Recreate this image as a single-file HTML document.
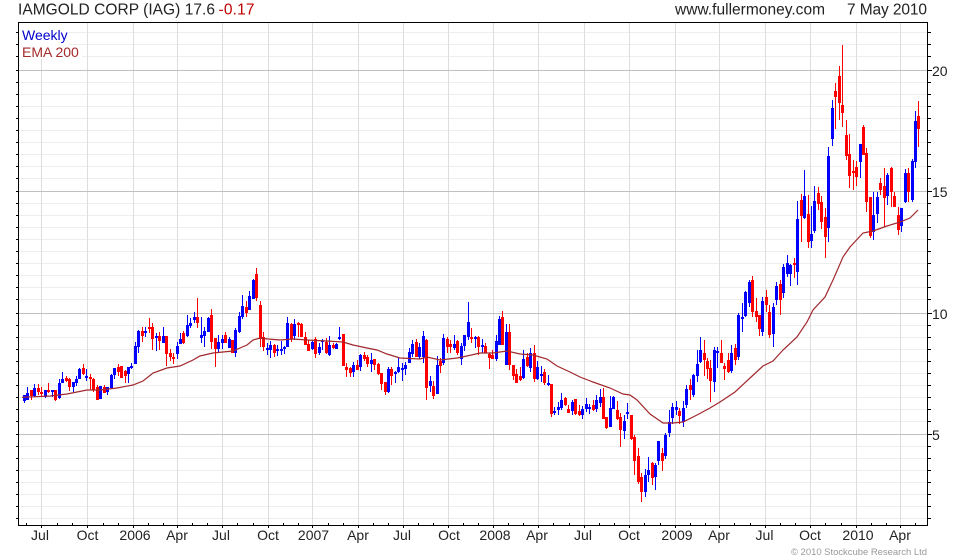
<!DOCTYPE html>
<html><head><meta charset="utf-8"><title>IAMGOLD CORP</title>
<style>html,body{margin:0;padding:0;background:#fff}svg{display:block}text{font-family:"Liberation Sans",Arial,sans-serif;font-size:14px;fill:#222}</style></head>
<body>
<svg width="980" height="560" viewBox="0 0 980 560" xmlns="http://www.w3.org/2000/svg">
<rect width="980" height="560" fill="#fff"/>
<g shape-rendering="crispEdges">
<path fill="none" stroke="#eeeeee" d="M19 32.5H927M19 44.5H927M19 56.5H927M19 82.5H927M19 94.5H927M19 106.5H927M19 118.5H927M19 130.5H927M19 142.5H927M19 154.5H927M19 166.5H927M19 178.5H927M19 203.5H927M19 215.5H927M19 227.5H927M19 239.5H927M19 251.5H927M19 263.5H927M19 275.5H927M19 287.5H927M19 299.5H927M19 325.5H927M19 337.5H927M19 349.5H927M19 361.5H927M19 373.5H927M19 385.5H927M19 397.5H927M19 409.5H927M19 421.5H927M19 446.5H927M19 458.5H927M19 470.5H927M19 482.5H927M19 494.5H927M19 506.5H927M19 518.5H927"/>
<path fill="none" stroke="#dddddd" d="M41.5 23V525M87.5 23V525M133.5 23V525M177.5 23V525M222.5 23V525M268.5 23V525M312.5 23V525M358.5 23V525M403.5 23V525M448.5 23V525M493.5 23V525M538.5 23V525M584.5 23V525M629.5 23V525M675.5 23V525M719.5 23V525M765.5 23V525M810.5 23V525M856.5 23V525M900.5 23V525"/>
<path fill="none" stroke="#c0c0c0" d="M19 70.5H927M19 191.5H927M19 313.5H927M19 434.5H927"/>
<rect x="19" y="23" width="50" height="22" fill="#fff"/>
<rect x="19" y="45" width="63" height="14" fill="#fff"/>
<!-- blue wicks -->
<path fill="none" stroke="#0000ff" stroke-width="1" d="M24.5 395V403M27.5 387V400M34.5 384V397M45.5 390V398M52.5 390V397M59.5 379V399M62.5 372V383M73.5 382V392M76.5 376V386M79.5 368V379M86.5 369V381M100.5 386V399M107.5 387V395M111.5 374V389M114.5 368V379M128.5 367V383M131.5 363V369M135.5 342V364M138.5 330V353M145.5 327V337M156.5 333V351M163.5 327V343M177.5 342V359M180.5 333V344M187.5 315V337M190.5 318V328M194.5 312V323M201.5 317V343M204.5 327V347M208.5 317V332M218.5 335V352M222.5 335V349M229.5 337V348M235.5 328V357M239.5 312V333M242.5 295V319M249.5 291V310M253.5 279V299M267.5 343V355M270.5 341V358M277.5 345V356M281.5 341V355M284.5 346V354M287.5 317V347M294.5 319V340M312.5 340V350M319.5 343V355M322.5 339V350M329.5 336V356M336.5 343V349M339.5 327V340M353.5 362V377M360.5 354V371M371.5 353V372M388.5 367V393M395.5 371V383M398.5 357V373M402.5 363V381M405.5 362V375M409.5 348V363M412.5 340V357M419.5 343V359M423.5 331V363M430.5 376V392M437.5 356V394M443.5 334V365M454.5 335V350M461.5 343V365M464.5 335V351M468.5 302V340M475.5 336V348M482.5 339V353M496.5 335V361M499.5 316V345M506.5 324V365M523.5 350V379M530.5 348V372M537.5 361V380M541.5 366V382M548.5 375V386M554.5 407V415M558.5 402V415M561.5 393V410M572.5 400V415M582.5 406V419M586.5 398V412M589.5 404V414M596.5 395V412M600.5 389V407M610.5 396V427M613.5 396V409M624.5 415V439M627.5 403V419M645.5 469V497M648.5 457V482M655.5 463V490M658.5 441V465M665.5 433V459M669.5 410V437M672.5 403V424M676.5 401V415M683.5 401V427M686.5 385V408M693.5 374V397M697.5 350V382M700.5 337V363M714.5 347V392M717.5 347V368M731.5 345V373M738.5 313V360M742.5 303V332M745.5 291V317M749.5 280V307M762.5 297V336M773.5 303V347M776.5 282V305M783.5 264V298M787.5 255V277M790.5 264V286M797.5 201V285M804.5 170V219M811.5 206V248M814.5 186V233M828.5 147V242M832.5 100V146M860.5 144V178M873.5 192V240M877.5 192V223M887.5 173V205M901.5 208V232M905.5 169V203M912.5 159V202M915.5 111V168"/>
<!-- blue bodies -->
<path fill="none" stroke="#0000ff" stroke-width="3" d="M24.5 395V401M27.5 393V400M34.5 388V396M45.5 390V397M52.5 390V392M59.5 383V398M62.5 379V383M73.5 382V387M76.5 379V383M79.5 369V379M86.5 376V378M100.5 386V399M107.5 387V392M111.5 375V388M114.5 368V375M128.5 367V374M131.5 366V368M135.5 346V364M138.5 331V347M145.5 331V333M156.5 336V338M163.5 336V343M177.5 346V354M180.5 339V344M187.5 325V336M190.5 323V326M194.5 317V320M201.5 335V338M204.5 331V336M208.5 318V332M218.5 342V349M222.5 339V343M229.5 339V348M235.5 330V353M239.5 316V332M242.5 306V317M249.5 296V310M253.5 280V299M267.5 348V350M270.5 345V350M277.5 349V351M281.5 349V351M284.5 347V349M287.5 323V347M294.5 324V336M312.5 342V349M319.5 347V353M322.5 341V342M329.5 345V355M336.5 344V349M339.5 337V339M353.5 365V372M360.5 355V367M371.5 360V364M388.5 369V392M395.5 372V374M398.5 367V372M402.5 368V370M405.5 365V369M409.5 352V363M412.5 344V354M419.5 347V357M423.5 336V357M430.5 381V386M437.5 365V394M443.5 338V363M454.5 344V348M461.5 346V359M464.5 335V346M468.5 322V337M475.5 337V339M482.5 345V347M496.5 341V359M499.5 319V345M506.5 332V365M523.5 359V378M530.5 353V368M537.5 367V379M541.5 374V376M548.5 383V385M554.5 411V413M558.5 407V410M561.5 400V408M572.5 402V411M582.5 409V415M586.5 404V409M589.5 407V409M596.5 400V409M600.5 397V403M610.5 408V427M613.5 397V409M624.5 421V431M627.5 412V414M645.5 475V492M648.5 470V475M655.5 465V477M658.5 441V461M665.5 435V456M669.5 422V433M672.5 407V418M676.5 407V410M683.5 408V422M686.5 389V405M693.5 375V395M697.5 364V376M700.5 350V362M714.5 350V382M717.5 351V353M731.5 353V371M738.5 315V357M742.5 317V319M745.5 292V316M749.5 282V303M762.5 301V332M773.5 307V334M776.5 286V300M783.5 267V293M787.5 263V274M790.5 265V274M797.5 219V272M804.5 196V218M811.5 234V241M814.5 201V231M828.5 156V228M832.5 108V139M860.5 144V162M873.5 215V232M877.5 197V214M887.5 175V196M901.5 208V226M905.5 173V202M912.5 161V200M915.5 121V162"/>
<!-- red wicks -->
<path fill="none" stroke="#ff0000" stroke-width="1" d="M31.5 390V400M38.5 384V395M41.5 387V397M48.5 383V393M55.5 390V401M66.5 376V382M69.5 378V391M83.5 364V375M90.5 374V390M93.5 378V392M97.5 385V400M104.5 385V393M118.5 364V376M121.5 366V378M125.5 370V383M142.5 327V342M149.5 318V333M152.5 323V350M159.5 332V350M166.5 336V366M170.5 349V361M173.5 353V364M183.5 331V344M197.5 298V328M211.5 309V349M215.5 338V367M225.5 332V343M232.5 340V353M246.5 301V317M256.5 268V301M260.5 301V347M263.5 332V351M274.5 344V357M291.5 323V342M298.5 322V337M301.5 323V337M305.5 332V345M308.5 340V351M315.5 337V358M326.5 338V354M333.5 343V349M343.5 334V366M346.5 363V377M350.5 367V377M357.5 360V370M364.5 352V361M367.5 355V367M374.5 359V370M378.5 363V375M381.5 373V390M385.5 382V395M391.5 367V385M416.5 339V357M426.5 339V400M433.5 381V399M440.5 358V373M447.5 337V353M450.5 340V353M457.5 340V355M471.5 328V343M478.5 336V355M485.5 343V353M489.5 353V369M492.5 350V359M502.5 311V345M509.5 324V370M513.5 365V380M516.5 369V383M520.5 367V381M527.5 353V367M534.5 345V382M544.5 369V385M551.5 384V417M565.5 397V406M568.5 405V413M575.5 399V415M579.5 405V416M593.5 400V411M603.5 388V419M606.5 417V429M617.5 401V420M620.5 413V447M631.5 415V440M634.5 435V475M638.5 448V484M641.5 473V502M652.5 462V485M662.5 448V471M679.5 408V424M690.5 379V400M704.5 340V376M707.5 358V379M710.5 360V402M721.5 340V363M724.5 363V380M728.5 353V373M735.5 344V365M752.5 276V317M756.5 298V322M759.5 315V336M766.5 290V312M769.5 305V338M780.5 280V315M794.5 258V278M801.5 194V242M808.5 195V248M818.5 187V210M821.5 196V229M825.5 208V258M835.5 83V129M839.5 66V120M842.5 45V127M846.5 120V160M849.5 134V188M853.5 160V190M856.5 161V186M863.5 125V155M866.5 148V212M870.5 197V238M880.5 178V195M884.5 168V227M891.5 167V207M894.5 192V207M898.5 207V235M908.5 168V202M918.5 101V147"/>
<!-- red bodies -->
<path fill="none" stroke="#ff0000" stroke-width="3" d="M31.5 390V396M38.5 388V392M41.5 392V394M48.5 390V392M55.5 390V400M66.5 378V381M69.5 379V387M83.5 368V374M90.5 377V379M93.5 379V390M97.5 387V400M104.5 387V393M118.5 367V372M121.5 366V378M125.5 371V376M142.5 331V336M149.5 327V329M152.5 327V339M159.5 336V341M166.5 336V354M170.5 353V357M173.5 357V359M183.5 333V343M197.5 317V323M211.5 315V342M215.5 338V349M225.5 335V343M232.5 340V353M246.5 307V313M256.5 274V298M260.5 305V339M263.5 337V347M274.5 345V353M291.5 324V339M298.5 323V325M301.5 324V337M305.5 337V345M308.5 344V351M315.5 339V354M326.5 342V353M333.5 345V348M343.5 334V366M346.5 367V370M350.5 368V373M357.5 365V370M364.5 355V359M367.5 357V364M374.5 359V365M378.5 364V374M381.5 373V384M385.5 382V392M391.5 369V376M416.5 342V357M426.5 340V388M433.5 386V396M440.5 361V366M447.5 339V347M450.5 344V347M457.5 341V353M471.5 337V339M478.5 337V347M485.5 346V353M489.5 354V358M492.5 355V359M502.5 317V345M509.5 332V365M513.5 365V376M516.5 374V383M520.5 376V380M527.5 357V366M534.5 353V379M544.5 372V383M551.5 384V414M565.5 398V405M568.5 409V413M575.5 399V414M579.5 411V415M593.5 405V410M603.5 397V419M606.5 417V428M617.5 410V419M620.5 417V430M631.5 415V439M634.5 437V461M638.5 456V482M641.5 477V492M652.5 463V478M662.5 453V461M679.5 411V416M690.5 385V390M704.5 353V360M707.5 361V369M710.5 368V381M721.5 353V363M724.5 366V369M728.5 360V372M735.5 348V360M752.5 280V312M756.5 311V317M759.5 315V329M766.5 297V305M769.5 312V335M780.5 284V300M794.5 263V265M801.5 200V216M808.5 214V242M818.5 193V204M821.5 202V222M825.5 217V237M835.5 91V97M839.5 76V103M842.5 105V113M846.5 135V156M849.5 154V176M853.5 171V173M856.5 167V177M863.5 127V155M866.5 153V202M870.5 197V236M880.5 183V190M884.5 186V198M891.5 168V192M894.5 196V207M898.5 215V230M908.5 173V192M918.5 116V129"/>
</g>
<!-- EMA -->
<polyline fill="none" stroke="#a0282c" stroke-width="1.2" points="22,397.3 50,396 67,394 87,390 100,390 117,388 133,385 143,381 153,373 167,368 180,366 193,360 200,356 213,353 233,351 240,348 247,345 253,340 260,338 268,339 280,340 293,339 307,340 327,341 343,342 353,345 367,348 377,350 387,354 400,358 420,359 427,357 440,360 457,358 467,356 480,353 493,353 507,351 520,354 533,355 547,359 557,366 570,372 580,377 593,382 610,388 623,394 630,395 637,400 650,414 663,423 673,423 683,422 697,415 710,408 720,402 735,392 750,378 763,366 773,361 783,350 797,337 807,322 813,310 825,297 833,280 843,257 850,247 863,233 873,231 887,226 900,222 910,218 918,210"/>
<!-- frame and ticks -->
<g shape-rendering="crispEdges" fill="none" stroke="#000">
<path d="M18.5 22.5H927.5V525.5H18.5Z"/>
<path d="M16 32.5h2M16 44.5h2M16 56.5h2M16 70.5h2M16 82.5h2M16 94.5h2M16 106.5h2M16 118.5h2M16 130.5h2M16 142.5h2M16 154.5h2M16 166.5h2M16 178.5h2M16 191.5h2M16 203.5h2M16 215.5h2M16 227.5h2M16 239.5h2M16 251.5h2M16 263.5h2M16 275.5h2M16 287.5h2M16 299.5h2M16 313.5h2M16 325.5h2M16 337.5h2M16 349.5h2M16 361.5h2M16 373.5h2M16 385.5h2M16 397.5h2M16 409.5h2M16 421.5h2M16 434.5h2M16 446.5h2M16 458.5h2M16 470.5h2M16 482.5h2M16 494.5h2M16 506.5h2M16 518.5h2"/>
<path d="M928 32.5h3M928 44.5h3M928 56.5h3M928 70.5h4M928 82.5h3M928 94.5h3M928 106.5h3M928 118.5h3M928 130.5h3M928 142.5h3M928 154.5h3M928 166.5h3M928 178.5h3M928 191.5h4M928 203.5h3M928 215.5h3M928 227.5h3M928 239.5h3M928 251.5h3M928 263.5h3M928 275.5h3M928 287.5h3M928 299.5h3M928 313.5h4M928 325.5h3M928 337.5h3M928 349.5h3M928 361.5h3M928 373.5h3M928 385.5h3M928 397.5h3M928 409.5h3M928 421.5h3M928 434.5h4M928 446.5h3M928 458.5h3M928 470.5h3M928 482.5h3M928 494.5h3M928 506.5h3M928 518.5h3"/>
<path d="M26.5 523v2M57.5 523v2M72.5 523v2M103.5 523v2M118.5 523v2M148.5 523v2M163.5 523v2M192.5 523v2M207.5 523v2M237.5 523v2M253.5 523v2M283.5 523v2M298.5 523v2M328.5 523v2M343.5 523v2M373.5 523v2M388.5 523v2M418.5 523v2M433.5 523v2M463.5 523v2M478.5 523v2M508.5 523v2M523.5 523v2M553.5 523v2M569.5 523v2M599.5 523v2M614.5 523v2M644.5 523v2M660.5 523v2M690.5 523v2M705.5 523v2M734.5 523v2M750.5 523v2M780.5 523v2M795.5 523v2M825.5 523v2M841.5 523v2M871.5 523v2M886.5 523v2M915.5 523v2"/>
<path d="M41.5 526v2M87.5 526v2M133.5 526v2M177.5 526v2M222.5 526v2M268.5 526v2M312.5 526v2M358.5 526v2M403.5 526v2M448.5 526v2M493.5 526v2M538.5 526v2M584.5 526v2M629.5 526v2M675.5 526v2M719.5 526v2M765.5 526v2M810.5 526v2M856.5 526v2M900.5 526v2"/>
</g>
<!-- text -->
<text x="18" y="14.5" style="font-size:15.5px" textLength="197" lengthAdjust="spacing">IAMGOLD CORP (IAG) 17.6</text>
<text x="218.5" y="14.5" style="font-size:15.5px;fill:#c00000" textLength="36" lengthAdjust="spacing">-0.17</text>
<text x="675" y="14.5" style="font-size:15.5px" textLength="150" lengthAdjust="spacing">www.fullermoney.com</text>
<text x="847" y="14.5" style="font-size:15.5px" textLength="80" lengthAdjust="spacing">7 May 2010</text>
<text x="22" y="40" style="fill:#0000cc">Weekly</text>
<text x="22" y="57" style="fill:#a52a2a">EMA 200</text>
<text x="932" y="76">20</text>
<text x="932" y="197">15</text>
<text x="932" y="319">10</text>
<text x="932" y="440">5</text>
<g text-anchor="middle">
<text x="40" y="540">Jul</text><text x="87.5" y="540">Oct</text><text x="135" y="540">2006</text><text x="177" y="540">Apr</text><text x="221" y="540">Jul</text><text x="268" y="540">Oct</text><text x="313.5" y="540">2007</text><text x="358" y="540">Apr</text><text x="402" y="540">Jul</text><text x="449" y="540">Oct</text><text x="495" y="540">2008</text><text x="537" y="540">Apr</text><text x="583" y="540">Jul</text><text x="629" y="540">Oct</text><text x="677" y="540">2009</text><text x="719" y="540">Apr</text><text x="764.5" y="540">Jul</text><text x="810" y="540">Oct</text><text x="858" y="540">2010</text><text x="900" y="540">Apr</text>
</g>
<text x="791" y="555" style="font-size:9.5px;fill:#999" textLength="136" lengthAdjust="spacing">© 2010 Stockcube Research Ltd</text>
</svg>
</body></html>
